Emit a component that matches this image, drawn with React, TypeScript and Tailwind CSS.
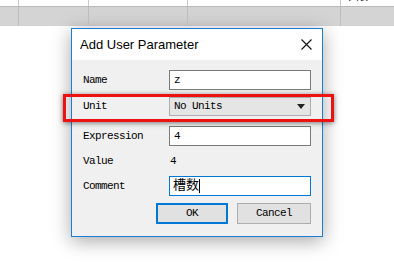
const mono = { fontFamily: '"Liberation Mono", "Noto Sans CJK SC", monospace' };

function Label({ children }: { children: React.ReactNode }) {
  return (
    <div className="w-[86px] text-[11px] tracking-[-0.6px] text-black" style={mono}>
      {children}
    </div>
  );
}

export default function App() {
  const cols = ["w-[18px]", "w-[70px]", "w-[99px]", "w-[153px]", "flex-1"];
  return (
    <div className="relative w-[394px] h-[276px] bg-white overflow-hidden" style={{ fontFamily: '"Liberation Sans", sans-serif' }}>
      {/* table behind the dialog, its last row scrolled mostly out of view */}
      <div className="flex h-[7px] border-b border-[#b9b9b9] overflow-hidden text-[12px] leading-[12px]" style={mono}>
        {["", "mm", "200 mm", "Lesser", "下限"].map((t, i) => (
          <div key={i} className={`${cols[i]} ${i > 0 ? "border-l border-[#c8c8c8]" : ""} pl-[3px] -mt-[9px] text-black`}>
            {t}
          </div>
        ))}
      </div>
      <div className="flex h-[19px] bg-[#d4d4d4]">
        {cols.map((c, i) => (
          <div key={i} className={`${c} ${i > 0 ? "border-l border-[#bdbdbd]" : ""}`} />
        ))}
      </div>

      {/* dialog */}
      <div className="ml-[71px] mt-[2px] w-[252px] h-[209px] border border-[#1a7fd4] bg-[#f0f0f0] shadow-[0_4px_18px_rgba(0,0,0,0.35)] flex flex-col">
        <div className="h-[31px] bg-white flex items-center justify-between pl-[8px] pr-[9px]">
          <span className="text-[13px] text-black">Add User Parameter</span>
          <svg width="11" height="11" viewBox="0 0 11 11" className="mr-[1px]">
            <path d="M0.5 0.5 L10.5 10.5 M10.5 0.5 L0.5 10.5" stroke="#111" strokeWidth="1.1" />
          </svg>
        </div>

        <div className="flex flex-col pl-[11px] pr-[11px] pt-[10px]">
          <div className="flex items-center h-[20px]">
            <Label>Name</Label>
            <div className="flex-1 h-[20px] bg-white border border-[#7a7a7a] flex items-center pl-[4px] text-[11px]" style={mono}>z</div>
          </div>

          <div className="flex items-center h-[20px] mt-[6px]">
            <Label>Unit</Label>
            <div className="flex-1 h-[19px] bg-[#e5e5e5] border border-[#adadad] flex items-center justify-between pl-[4px] pr-[5px] text-[11px] tracking-[-0.6px]" style={mono}>
              <span>No Units</span>
              <svg width="8" height="5" viewBox="0 0 8 5"><path d="M0 0 H8 L4 5 Z" fill="#222" /></svg>
            </div>
          </div>

          <div className="flex items-center h-[20px] mt-[10px]">
            <Label>Expression</Label>
            <div className="flex-1 h-[20px] bg-white border border-[#7a7a7a] flex items-center pl-[4px] text-[11px]" style={mono}>4</div>
          </div>

          <div className="flex items-center h-[20px] mt-[5px]">
            <Label>Value</Label>
            <div className="flex-1 pl-[1px] text-[11px]" style={mono}>4</div>
          </div>

          <div className="flex items-center h-[20px] mt-[5px]">
            <Label>Comment</Label>
            <div className="flex-1 h-[20px] bg-white border border-[#0078d7] flex items-center pl-[3px] text-[13px]" style={mono}>
              槽数<span className="w-px h-[14px] bg-black" />
            </div>
          </div>

          <div className="flex justify-end gap-[9px] mt-[7px]">
            <button className="w-[72px] h-[21px] bg-[#e1e1e1] border-2 border-[#0078d7] text-[11px] tracking-[-0.6px]" style={mono}>OK</button>
            <button className="w-[74px] h-[21px] bg-[#e1e1e1] border border-[#adadad] text-[11px] tracking-[-0.6px]" style={mono}>Cancel</button>
          </div>
        </div>
      </div>

      {/* red annotation box */}
      <div className="absolute left-[63px] top-[94px] w-[271px] h-[28px] border-[3px] border-[#ee1111] shadow-[0_1px_5px_rgba(0,0,0,0.5)]" />
    </div>
  );
}
